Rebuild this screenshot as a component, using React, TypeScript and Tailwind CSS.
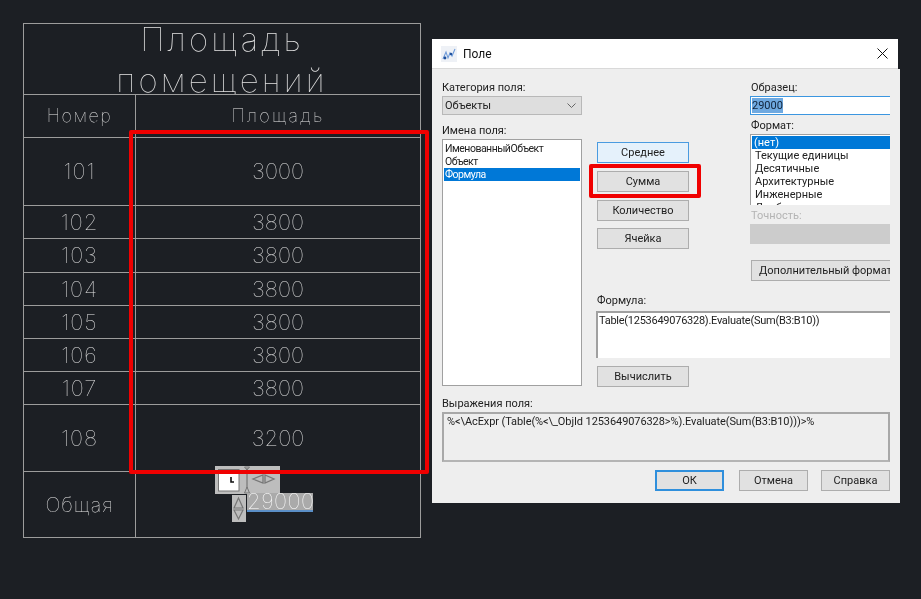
const cadFont = "font-['Inter',sans-serif] font-thin text-[#e2e2e2]";
const uiFont = "font-['Roboto','Noto_Sans',sans-serif]";

const rows = [
  { num: "101", area: "3000", h: "h-[68px]" },
  { num: "102", area: "3800", h: "h-[33px]" },
  { num: "103", area: "3800", h: "h-[34px]" },
  { num: "104", area: "3800", h: "h-[33px]" },
  { num: "105", area: "3800", h: "h-[33px]" },
  { num: "106", area: "3800", h: "h-[33px]" },
  { num: "107", area: "3800", h: "h-[33px]" },
  { num: "108", area: "3200", h: "h-[67px]" },
];

function WinButton({ label, active, className }: { label: string; active?: boolean; className?: string }) {
  return (
    <div
      className={`h-[21px] flex items-center justify-center text-[11px] text-[#222] border ${
        active ? "bg-[#e5f1fb] border-[#4a9be0]" : "bg-[#e1e1e1] border-[#adadad]"
      } ${className ?? ""}`}
    >
      {label}
    </div>
  );
}

function FieldDialog() {
  return (
    <div className={`absolute left-[432px] top-[39px] w-[468px] h-[464px] ${uiFont} text-[11px] leading-[16px] text-[#222]`}>
      {/* title bar */}
      <div className="h-[30px] w-[466px] bg-white flex items-center border-b border-[#d9d9d9]">
        <svg width="16" height="16" viewBox="0 0 16 16" className="ml-[9px]">
          <rect width="16" height="16" fill="#eef1f6" />
          <path d="M2 13 L5 6 L7 12 L9 7 L11 10 L14 3" fill="none" stroke="#6f9bd8" strokeWidth="1.1" />
          <circle cx="4" cy="12" r="1.4" fill="#1d4f9c" />
          <circle cx="10" cy="8" r="1.2" fill="#1d4f9c" />
        </svg>
        <span className="ml-[6px] text-[12px] text-[#111]">Поле</span>
        <svg width="11" height="11" viewBox="0 0 11 11" className="ml-auto mr-[10px]">
          <path d="M0.5 0.5 L10.5 10.5 M10.5 0.5 L0.5 10.5" stroke="#111" strokeWidth="1" />
        </svg>
      </div>

      {/* body */}
      <div className="bg-[#eeeeee] h-[434px] pl-[10px] pt-[11px]">
        <div className="w-[448px]">
          <div className="flex">
            {/* left column */}
            <div className="w-[140px] shrink-0">
              <div className="h-[14px]">Категория поля:</div>
              <div className="mt-[2px] h-[19px] bg-[#dedede] border border-[#b8b8b8] flex items-center pl-[2px] pr-[3px]">
                <span>Объекты</span>
                <svg width="9" height="5" viewBox="0 0 9 5" className="ml-auto mr-[2px]">
                  <path d="M0.5 0.5 L4.5 4.5 L8.5 0.5" fill="none" stroke="#666" />
                </svg>
              </div>
              <div className="mt-[8px] h-[14px]">Имена поля:</div>
              <div className="mt-[2px] h-[247px] bg-white border border-[#a0a0a0] pt-[2px] px-[1px] text-[10.5px] leading-[13px] tracking-[-0.5px]">
                <div className="pl-[1px] h-[13px]">ИменованныйОбъект</div>
                <div className="pl-[1px] h-[13px]">Объект</div>
                <div className="pl-[1px] h-[13px] bg-[#0078d7] text-white">Формула</div>
              </div>
            </div>

            <div className="ml-[15px] w-[293px]">
              <div className="flex">
                {/* function buttons */}
                <div className="w-[92px] shrink-0 pt-[62px]">
                  <WinButton label="Среднее" active />
                  <WinButton label="Сумма" className="mt-[8px]" />
                  <WinButton label="Количество" className="mt-[8px]" />
                  <WinButton label="Ячейка" className="mt-[7px]" />
                </div>

                {/* sample and format */}
                <div className="ml-[61px] w-[140px]">
                  <div className="h-[14px] pl-px">Образец:</div>
                  <div className="mt-[2px] h-[19px] bg-white border-t border-l border-b border-[#3b96e0] flex items-center pl-px">
                    <span className="bg-[#6fa9e0] text-[#10233a] leading-[15px]">29000</span>
                  </div>
                  <div className="mt-[3px] h-[14px] pl-px">Формат:</div>
                  <div className="mt-[2px] h-[71px] bg-white border-t border-l border-[#a0a0a0] pt-[1px] pl-px leading-[13px] overflow-hidden">
                    <div className="pl-[2px] h-[13px] bg-[#0078d7] text-white">(нет)</div>
                    <div className="pl-[3px] h-[13px]">Текущие единицы</div>
                    <div className="pl-[3px] h-[13px]">Десятичные</div>
                    <div className="pl-[3px] h-[13px]">Архитектурные</div>
                    <div className="pl-[3px] h-[13px]">Инженерные</div>
                    <div className="pl-[3px] h-[13px]">Дробные</div>
                  </div>
                  <div className="mt-[3px] h-[14px] pl-px text-[#b4b4b4]">Точность:</div>
                  <div className="mt-[2px] h-[20px] bg-[#cccccc]" />
                  <div className="mt-[16px] ml-px h-[21px] bg-[#e1e1e1] border-t border-l border-b border-[#adadad] pl-[7px] flex items-center overflow-hidden whitespace-nowrap">
                    Дополнительный формат
                  </div>
                </div>
              </div>

              {/* formula */}
              <div className="mt-[12px] h-[14px]">Формула:</div>
              <div className="mt-[4px] -ml-px h-[47px] bg-white border-t-2 border-l-2 border-[#a0a0a0] pl-px leading-[15px] tracking-[-0.26px]">
                Table(1253649076328).Evaluate(Sum(B3:B10))
              </div>
              <WinButton label="Вычислить" className="mt-[8px] w-[92px]" />
            </div>
          </div>

          {/* field expression */}
          <div className="mt-[9px] h-[14px]">Выражения поля:</div>
          <div className="mt-[2px] h-[50px] border-2 border-[#a8a8a8] border-b-[#b4b4b4] pl-[3px] pt-[1px] leading-[14px] tracking-[-0.09px]">
            {"%<\\AcExpr (Table(%<\\_ObjId 1253649076328>%).Evaluate(Sum(B3:B10)))>%"}
          </div>
          <div className="mt-[8px] flex justify-end">
            <WinButton label="ОК" className="w-[69px] !border-2 !border-[#2f8fdc]" />
            <WinButton label="Отмена" className="ml-[15px] w-[69px]" />
            <WinButton label="Справка" className="ml-[13px] w-[69px]" />
          </div>
        </div>
      </div>
    </div>
  );
}

export default function App() {
  return (
    <div className="relative h-[599px] w-[921px] overflow-hidden bg-[#1c1f24] pt-[23px] pl-[23px] blur-[0.3px]">
      {/* drawing table */}
      <div className={`w-[398px] border border-[#9c9c9c] ${cadFont}`}>
        <div className="h-[70px] overflow-hidden flex flex-col items-center text-[33px] leading-[41px] tracking-[3.2px]">
          <div className="-mt-[5px]">Площадь</div>
          <div>помещений</div>
        </div>
        <div className="flex h-[43px] border-t border-[#9c9c9c] text-[18px]">
          <div className="w-[111px] flex items-center justify-center tracking-[1.5px] -mt-[2px]">Номер</div>
          <div className="flex-1 flex items-center justify-center border-l border-[#9c9c9c] tracking-[2.3px]">
            <span className="-mt-[2px]">Площадь</span>
          </div>
        </div>
        {rows.map((r) => (
          <div key={r.num} className={`flex ${r.h} border-t border-[#9c9c9c] text-[22px]`}>
            <div className="w-[111px] flex items-center justify-center tracking-[1px]">{r.num}</div>
            <div className="flex-1 flex items-center justify-center border-l border-[#9c9c9c]">{r.area}</div>
          </div>
        ))}
        <div className="flex h-[66px] border-t border-[#9c9c9c]">
          <div className="w-[111px] flex items-center justify-center text-[20px] tracking-[1px]">Общая</div>
          <div className="flex-1 border-l border-[#9c9c9c]" />
        </div>
      </div>

      {/* in-place text editor widgets */}
      <div className="absolute left-[215px] top-[466px] w-[65px] h-[28px] bg-[#bdbdbd]">
        <svg width="65" height="28" viewBox="0 0 65 28">
          <rect x="3.5" y="3.5" width="20.5" height="21.5" fill="#fff" stroke="#777" />
          <path d="M16 11 V16 H19" fill="none" stroke="#111" strokeWidth="1.6" />
          <path d="M32 2 V22" stroke="#666" />
          <path d="M29.5 1 H34.5 L32 4 Z M32 21 L34.5 27 H29.5 Z" fill="none" stroke="#777" />
          <path d="M48 9 V17 L38 13 Z M50 9 V17 L59 13 Z" fill="none" stroke="#777" strokeWidth="1.3" />
        </svg>
      </div>
      <div className="absolute left-[232px] top-[495px] w-[14px] h-[27px] bg-[#bdbdbd]">
        <svg width="14" height="27" viewBox="0 0 14 27">
          <path d="M6.5 3 L11 13 H2 Z M2 15 H11 L6.5 24 Z" fill="none" stroke="#777" strokeWidth="1.2" />
        </svg>
      </div>
      <div className="absolute left-[247px] top-[493px] w-[66px] h-[19px] bg-[#aaaaaa] border-b-2 border-[#5b8fc7]">
        <span className="block font-['Inter',sans-serif] font-thin text-[22px] leading-[17px] tracking-[0.5px] text-white">29000</span>
      </div>

      <FieldDialog />

      {/* red highlight frames */}
      <div className="absolute left-[129px] top-[130px] w-[300px] h-[344px] border-4 border-[#f00000] rounded-[2px]" />
      <div className="absolute left-[589px] top-[164px] w-[112px] h-[34px] border-4 border-[#f00000] rounded-[2px]" />
    </div>
  );
}
